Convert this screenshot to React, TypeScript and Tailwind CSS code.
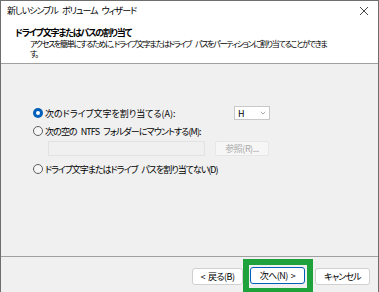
import { ChevronDown } from "lucide-react";

const FONT = "font-['Noto_Sans_CJK_JP','Noto_Sans',sans-serif] [font-feature-settings:'palt']";

// spaces shrink under negative tracking, so give them a fixed width
function Sp({ w = "w-[4px]" }: { w?: string }) {
  return <span className={`inline-block ${w}`} />;
}

function Radio({ checked }: { checked?: boolean }) {
  if (checked) {
    return (
      <span className="flex h-[10px] w-[10px] shrink-0 items-center justify-center rounded-full bg-[#005fb8]">
        <span className="h-[4px] w-[4px] rounded-full bg-white" />
      </span>
    );
  }
  return <span className="h-[10px] w-[10px] shrink-0 rounded-full border border-[#5f5f5f] bg-[#f6f6f6]" />;
}

export default function App() {
  return (
    <div className={`flex h-[292px] w-[379px] flex-col overflow-hidden border-x border-t border-[#6e6e6e] bg-[#f0f0f0] text-[9px] leading-none text-black ${FONT}`}>
      {/* title bar */}
      <div className="flex h-[19px] items-center justify-between bg-white pl-[6px] pr-[8px]">
        <span className="tracking-[-1px]">
          新しいシンプル<Sp />ボリューム<Sp />ウィザード
        </span>
        <svg width="10" height="10" viewBox="0 0 10 10" className="mr-[1px]">
          <path d="M1 1L9 9M9 1L1 9" stroke="#333" strokeWidth="0.9" />
        </svg>
      </div>

      {/* header */}
      <div className="h-[44px] border-b border-[#a0a0a0] bg-white pl-[14px] pt-[8px]">
        <p className="font-bold tracking-[-1.2px]">ドライブ文字またはパスの割り当て</p>
        <p className="mt-[2px] whitespace-nowrap pl-[15px] text-[8px] leading-[10px] tracking-[-1.27px]">
          アクセスを簡単にするために、ドライブ文字またはドライブ<Sp />パスをパーティションに割り当てることができま
          <br />す。
        </p>
      </div>

      {/* body */}
      <div className="flex flex-1 flex-col pl-[32px] pt-[42px]">
        <div className="flex h-[14px] items-center">
          <div className="flex w-[201px] items-center gap-[2px]">
            <Radio checked />
            <span>次のドライブ文字を割り当てる(A):</span>
          </div>
          <div className="flex h-[14px] w-[36px] items-center justify-between border border-[#c8c8c8] bg-white pl-[3px] pr-[2px]">
            <span>H</span>
            <ChevronDown size={8} strokeWidth={1.5} className="text-[#555]" />
          </div>
        </div>

        <div className="mt-[4px] flex h-[14px] items-center gap-[2px]">
          <Radio />
          <span className="tracking-[-0.9px]">
            次の空の<Sp />NTFS<Sp />フォルダーにマウントする(M):
          </span>
        </div>

        <div className="mt-[3px] flex items-center gap-[10px] pl-[15px]">
          <div className="h-[15px] w-[157px] border border-[#e2e2e2] bg-[#f0f0f0]" />
          <div className="flex h-[15px] w-[54px] items-center justify-center rounded-[2px] border border-[#e6e6e6] bg-[#f6f6f6] tracking-[-0.5px] text-[#a8a8a8]">
            参照(R)...
          </div>
        </div>

        <div className="mt-[6px] flex h-[14px] items-center gap-[2px]">
          <Radio />
          <span className="tracking-[-1px]">
            ドライブ文字またはドライブ<Sp />パスを割り当てない(D)
          </span>
        </div>
      </div>

      {/* footer */}
      <div className="flex h-[36px] items-start border-t border-[#a0a0a0] pl-[191px]">
        <div className="mt-[11px] flex h-[17px] w-[51px] items-center justify-center rounded-[3px] border border-[#d0d0d0] bg-white tracking-[-0.5px]">
          &lt;<Sp w="w-[3px]" />戻る(B)
        </div>
        <div className="mt-[2px] h-[35px] border-[6px] border-[#1ea33c] pl-[1px] pr-[2px] pt-[2px]">
          <div className="flex h-[17px] w-[55px] items-center justify-center rounded-[3px] border border-[#005fb8] bg-white tracking-[-0.5px]">
            次へ(N)<Sp w="w-[3px]" />&gt;
          </div>
        </div>
        <div className="ml-[2px] mt-[11px] flex h-[17px] w-[55px] items-center justify-center rounded-[3px] border border-[#d0d0d0] bg-white tracking-[-0.8px]">
          キャンセル
        </div>
      </div>
    </div>
  );
}
